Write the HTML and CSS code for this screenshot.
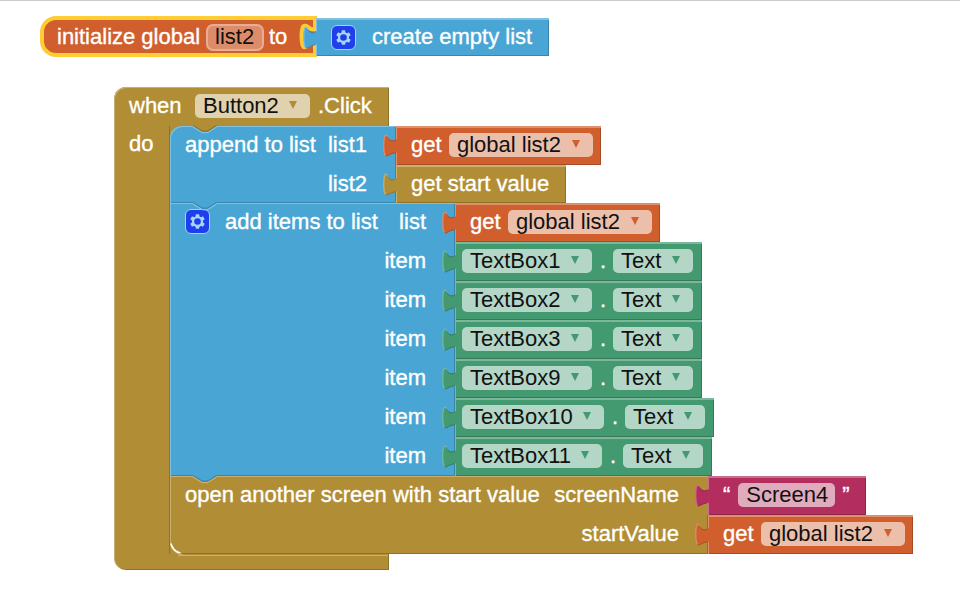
FILE: index.html
```
<!DOCTYPE html>
<html lang="en">
<head>
<meta charset="utf-8">
<title>Blocks workspace</title>
<link rel="stylesheet" href="styles.css">
</head>
<body>
<svg class="defs" width="0" height="0">
  <symbol id="tab" viewBox="0 0 15 26" overflow="visible">
    <path fill="currentColor" d="M15 5.500H13C10.500 7.500 7.500 7 5.800 4.500C4.500 2 3.500 1 2.300 1.500C1.300 2 .8 6 .8 11.500C.8 17 1.300 20.500 2.600 21.500C4.500 22.500 7 19.500 13 18.500H15Z"/>
    <path class="tab-light" d="M4.500 2.300C3.500 1 2.800 1 2.200 1.600C1.300 2.500 .8 6 .8 11.500C.8 17 1.300 20.500 2.600 21.500"/>
    <path class="tab-dark" d="M2.600 21.700C4.500 22.700 7 19.500 12.500 18.700M5.500 4.500C7.500 7.500 10.500 7.500 12.500 5.800"/>
  </symbol>
  <symbol id="gear" viewBox="-12.5 -12.5 25 25">
    <g fill="currentColor">
      <rect x="-2" y="-8" width="4" height="16" rx=".8"/>
      <rect x="-2" y="-8" width="4" height="16" rx=".8" transform="rotate(60)"/>
      <rect x="-2" y="-8" width="4" height="16" rx=".8" transform="rotate(120)"/>
      <circle r="6"/>
    </g>
    <circle r="3.600" fill="#1f3fef"/>
  </symbol>
  <symbol id="notch" viewBox="0 0 26 9">
    <path class="notch-fill" d="M1 0V1H1.500L10.500 7H15.500L24.500 1V0Z"/>
    <path class="notch-dark" d="M1 .5L10.500 6.200H15.500L24.500 .5"/>
    <path class="notch-light" d="M1 2L10.500 7.700H15.500L24.500 2"/>
  </symbol>
</svg>
<main class="workspace">
  <section class="root declaration">
    <div class="init">
      <span class="text">initialize global</span><span class="name-field">list2</span><span class="text">to</span>
      <svg class="socket" width="20" height="41" viewBox="0 0 20 41"><path d="M18 2V13.500C14 14 12.500 12.500 11 11C9 9 6 9.500 5.500 12C4.300 17 4.300 24 5.500 29C6.500 32.500 9 31 11 29.500C13 28 15 27 18 26.500V39"/></svg>
    </div>
    <div class="value blue empty-list"><svg class="tab"><use href="#tab"/></svg><svg class="gear"><use href="#gear"/></svg><span class="text">create empty list</span></div>
  </section>

  <section class="root event">
    <header class="event-head"><span class="text">when</span><span class="field button-field">Button2<i></i></span><span class="text">.Click</span></header>
    <div class="event-body">
      <div class="arm"><span class="text">do</span></div>
      <div class="stack">
        <div class="statement append">
          <svg class="notch from-tan"><use href="#notch"/></svg>
          <div class="row"><div class="label blue"><span class="text">append to list</span><span class="text arg">list1</span></div><div class="value orange get"><svg class="tab"><use href="#tab"/></svg><span class="text">get</span><span class="field">global list2<i></i></span></div></div>
          <div class="row short"><div class="label blue"><span class="text arg">list2</span></div><div class="value tan start"><svg class="tab"><use href="#tab"/></svg><span class="text">get start value</span></div></div>
        </div>
        <div class="statement add">
          <svg class="notch from-blue"><use href="#notch"/></svg>
          <div class="row"><div class="label blue"><svg class="gear"><use href="#gear"/></svg><span class="text add-title">add items to list</span><span class="text arg">list</span></div><div class="value orange get"><svg class="tab"><use href="#tab"/></svg><span class="text">get</span><span class="field">global list2<i></i></span></div></div>
          <div class="row"><div class="label blue"><span class="text arg">item</span></div><div class="value green"><svg class="tab"><use href="#tab"/></svg><span class="field component">TextBox1<i></i></span><span class="dot">.</span><span class="field prop">Text<i></i></span></div></div>
          <div class="row"><div class="label blue"><span class="text arg">item</span></div><div class="value green"><svg class="tab"><use href="#tab"/></svg><span class="field component">TextBox2<i></i></span><span class="dot">.</span><span class="field prop">Text<i></i></span></div></div>
          <div class="row"><div class="label blue"><span class="text arg">item</span></div><div class="value green"><svg class="tab"><use href="#tab"/></svg><span class="field component">TextBox3<i></i></span><span class="dot">.</span><span class="field prop">Text<i></i></span></div></div>
          <div class="row"><div class="label blue"><span class="text arg">item</span></div><div class="value green"><svg class="tab"><use href="#tab"/></svg><span class="field component">TextBox9<i></i></span><span class="dot">.</span><span class="field prop">Text<i></i></span></div></div>
          <div class="row"><div class="label blue"><span class="text arg">item</span></div><div class="value green"><svg class="tab"><use href="#tab"/></svg><span class="field component ten">TextBox10<i></i></span><span class="dot">.</span><span class="field prop">Text<i></i></span></div></div>
          <div class="row"><div class="label blue"><span class="text arg">item</span></div><div class="value green"><svg class="tab"><use href="#tab"/></svg><span class="field component eleven">TextBox11<i></i></span><span class="dot">.</span><span class="field prop">Text<i></i></span></div></div>
        </div>
        <div class="statement open">
          <svg class="notch blue-on-tan"><use href="#notch"/></svg>
          <div class="row"><div class="label tan"><span class="text">open another screen with start value</span><span class="text arg">screenName</span></div><div class="value pink string"><svg class="tab"><use href="#tab"/></svg><span class="text quote">“</span><span class="field screen">Screen4</span><span class="text quote">”</span></div></div>
          <div class="row"><div class="label tan last"><span class="text arg">startValue</span></div><div class="value orange get"><svg class="tab"><use href="#tab"/></svg><span class="text">get</span><span class="field">global list2<i></i></span></div></div>
          <svg class="corner" width="16" height="16" viewBox="0 0 16 16"><path stroke="#c8b072" d="M.5 3C.5 10.500 6 15.500 13 15.500"/><path stroke="#fff" stroke-width="1.600" d="M1 4.500C1.800 9 5.500 13.200 10.500 14"/></svg>
        </div>
      </div>
    </div>
    <footer class="event-foot"></footer>
  </section>
</main>
</body>
</html>
```
FILE: styles.css
```
* { box-sizing: border-box; }
body { margin: 0; background: #fff; font: 22px/24px "Liberation Sans", Arial, sans-serif; }
.defs { position: absolute; }
.workspace { position: relative; width: 960px; height: 589px; overflow: hidden; border-top: 1px solid #ccc; }
.root { position: absolute; }
.declaration { left: 40px; top: 15px; display: flex; }
.event { left: 114px; top: 86px; }

.text { color: #fff; white-space: nowrap; -webkit-text-stroke: .35px #fff; }
.blue { background: #49a6d4; color: #49a6d4; --light: #80c1e1; --dark: #3a85aa; }
.orange { background: #d05f2d; color: #d05f2d; --light: #de8f6c; --dark: #a64c24; }
.tan { background: #b18e35; color: #b18e35; --light: #c8b072; --dark: #8e722a; }
.green { background: #439970; color: #439970; --light: #7bb89b; --dark: #367a5a; }
.pink { background: #b32d5e; color: #b32d5e; --light: #ca6c8e; --dark: #8f244b; }

.init { position: relative; display: flex; width: 277px; height: 41px; padding: 5px 0 0 13px; border: 4px solid #fc3; border-right: 0; border-radius: 16px 0 0 16px; background: #d05f2d; }
.init .text:first-child { width: 149px; }
.name-field { width: 58px; height: 27px; margin: -1px 5px 0 0; padding: 0 0 0 7px; line-height: 22px; border: 2px solid #e8ae95; border-radius: 7px; background: #dd8c69; color: #111; }
.socket { position: absolute; right: 0; top: -4px; }
.socket path { fill: none; stroke: #fc3; stroke-width: 4; }

.value { position: relative; display: flex; align-items: flex-start; height: 39px; padding-top: 7px; box-shadow: inset 1px 2px var(--light), inset -1px -1px var(--dark); }
.tab { position: absolute; left: -13px; top: 8px; width: 15px; height: 26px; overflow: visible; z-index: 2; }
.tab-light { fill: none; stroke: var(--light); stroke-width: 1.2; }
.tab-dark { fill: none; stroke: var(--dark); stroke-width: 1; }
.empty-list { width: 233px; height: 38px; margin: 2px 0 0 -1px; padding-left: 15px; }
.empty-list .text { margin-left: 16px; }
.gear { flex: none; width: 25px; height: 25px; border: 1.5px solid #a4d3ea; border-radius: 6px; background: #1f3fef; color: #a9d5ef; }

.field { position: relative; display: flex; justify-content: space-between; height: 24px; padding: 0 13px 0 8px; border-radius: 5px; background: rgba(255,255,255,.6); color: #111; white-space: nowrap; }
.field i { width: 8px; height: 8px; margin-top: 7px; background: #d05f2d; clip-path: polygon(0 0, 100% 0, 50% 100%); }
.green .field i { background: #439970; }

.event-head { display: flex; width: 275px; height: 39px; padding: 7px 0 0 15px; border-radius: 12px 0 0; background: #b18e35; box-shadow: inset 1px 1px #c8b072, inset -1px 0 #8e722a; }
.button-field { width: 115px; margin: 0 8px 0 13px; }
.field.button-field i { background: #b18e35; }
.event-head .text:first-child { width: 53px; }
.event-body { display: flex; }
.arm { width: 56px; padding: 6px 0 0 15px; background: #b18e35; box-shadow: inset 1px 0 #c8b072, inset -1px 0 #8e722a; }
.event-foot { width: 275px; height: 16px; border-radius: 0 0 0 12px; box-shadow: inset 1px 0 #c8b072, inset -1px -1px #8e722a; background: linear-gradient(#c8b072, #c8b072) 64px 1px / 211px 1px no-repeat, #b18e35; }
.stack { background: linear-gradient(#b18e35, #b18e35) 0 0 / 16px 100% no-repeat; }
.statement { position: relative; }
.row { display: flex; height: 39px; }
.short, .short .value { height: 38px; }
.label { display: flex; justify-content: flex-end; align-items: flex-start; padding: 7px 29px 0 15px; box-shadow: inset 1px 0 var(--light), inset -1px 0 var(--dark); }
.label .text:first-child:not(.arg), .label .add-title { margin-right: auto; }
.append .label { width: 226px; }
.append .row:nth-child(2) .label { border-radius: 12px 0 0; box-shadow: inset 1px 1px #80c1e1, inset -1px 0 #3a85aa; }
.append .short .label { box-shadow: inset 1px 0 #80c1e1, inset -1px -1px #3a85aa; }
.add .label { width: 285px; padding-left: 15px; }
.add .label .gear { margin: -1px 15px 0 0; }
.add .row:nth-child(2) .label { box-shadow: inset 1px 1px #80c1e1, inset -1px 0 #3a85aa; }
.add .row:last-of-type .label { box-shadow: inset 1px 0 #80c1e1, inset -1px -1px #3a85aa; }
.open .label { width: 538px; }
.open .row:nth-child(2) .label { box-shadow: inset 1px 1px #c8b072; }
.open .row .last { border-radius: 0 0 0 12px; box-shadow: inset 1px 0 #c8b072, inset -1px -1px #8e722a; }
.corner { position: absolute; left: 0; bottom: -1px; }
.corner path { fill: none; }

.get { width: 205px; padding-left: 15px; }
.get .text { width: 38px; }
.get .field { width: 144px; }
.start { width: 170px; padding-left: 15px; }
.green { padding: 7px 9px 0 7px; }
.component { width: 130px; }
.ten { width: 142px; }
.eleven { width: 140px; }
.prop { width: 80px; }
.dot { width: 21px; padding-left: 8px; color: #fff; -webkit-text-stroke: .35px #fff; }
.string { width: 158px; padding-left: 15px; }
.screen { width: 97px; margin: 0 7px 0 8px; }

.notch { position: absolute; left: 22px; top: -1px; width: 26px; height: 9px; z-index: 1; }
.notch-fill { fill: var(--notch); }
.notch-dark, .notch-light { fill: none; stroke-width: 1.2; }
.notch-dark { stroke: var(--dark); }
.notch-light { stroke: var(--light); }
.from-tan { --notch: #b18e35; --dark: #8e722a; --light: #80c1e1; }
.from-blue { --notch: #49a6d4; --dark: #3a85aa; --light: #80c1e1; }
.blue-on-tan { --notch: #49a6d4; --dark: #3a85aa; --light: #c8b072; }
```
